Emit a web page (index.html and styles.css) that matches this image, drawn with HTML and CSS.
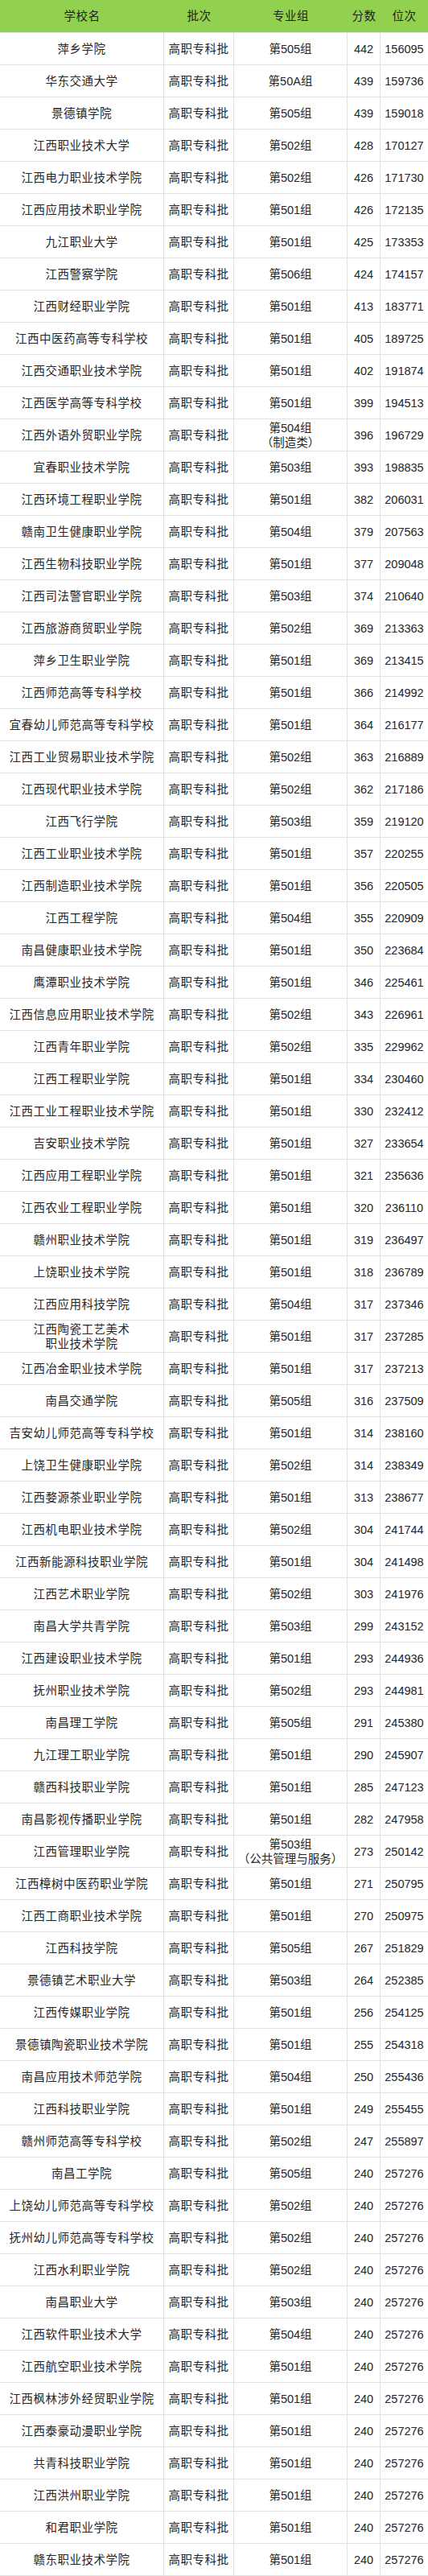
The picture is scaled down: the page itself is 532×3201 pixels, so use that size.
FILE: index.html
```html
<!DOCTYPE html>
<html lang="zh-CN">
<head>
<meta charset="utf-8">
<title>高职专科批投档线</title>
<link rel="stylesheet" href="styles.css">
</head>
<body>
<div class="sheet">
  <div class="row head"><div class="c t">学校名</div><div class="c t">批次</div><div class="c t">专业组</div><div class="c t">分数</div><div class="c t">位次</div></div>
  <div class="row"><div class="c t">萍乡学院</div><div class="c t">高职专科批</div><div class="c">第505组</div><div class="c">442</div><div class="c">156095</div></div>
  <div class="row"><div class="c t">华东交通大学</div><div class="c t">高职专科批</div><div class="c">第50A组</div><div class="c">439</div><div class="c">159736</div></div>
  <div class="row"><div class="c t">景德镇学院</div><div class="c t">高职专科批</div><div class="c">第505组</div><div class="c">439</div><div class="c">159018</div></div>
  <div class="row"><div class="c t">江西职业技术大学</div><div class="c t">高职专科批</div><div class="c">第502组</div><div class="c">428</div><div class="c">170127</div></div>
  <div class="row"><div class="c t">江西电力职业技术学院</div><div class="c t">高职专科批</div><div class="c">第502组</div><div class="c">426</div><div class="c">171730</div></div>
  <div class="row"><div class="c t">江西应用技术职业学院</div><div class="c t">高职专科批</div><div class="c">第501组</div><div class="c">426</div><div class="c">172135</div></div>
  <div class="row"><div class="c t">九江职业大学</div><div class="c t">高职专科批</div><div class="c">第501组</div><div class="c">425</div><div class="c">173353</div></div>
  <div class="row"><div class="c t">江西警察学院</div><div class="c t">高职专科批</div><div class="c">第506组</div><div class="c">424</div><div class="c">174157</div></div>
  <div class="row"><div class="c t">江西财经职业学院</div><div class="c t">高职专科批</div><div class="c">第501组</div><div class="c">413</div><div class="c">183771</div></div>
  <div class="row"><div class="c t">江西中医药高等专科学校</div><div class="c t">高职专科批</div><div class="c">第501组</div><div class="c">405</div><div class="c">189725</div></div>
  <div class="row"><div class="c t">江西交通职业技术学院</div><div class="c t">高职专科批</div><div class="c">第501组</div><div class="c">402</div><div class="c">191874</div></div>
  <div class="row"><div class="c t">江西医学高等专科学校</div><div class="c t">高职专科批</div><div class="c">第501组</div><div class="c">399</div><div class="c">194513</div></div>
  <div class="row"><div class="c t">江西外语外贸职业学院</div><div class="c t">高职专科批</div><div class="c">第504组<br>（制造类）</div><div class="c">396</div><div class="c">196729</div></div>
  <div class="row"><div class="c t">宜春职业技术学院</div><div class="c t">高职专科批</div><div class="c">第503组</div><div class="c">393</div><div class="c">198835</div></div>
  <div class="row"><div class="c t">江西环境工程职业学院</div><div class="c t">高职专科批</div><div class="c">第501组</div><div class="c">382</div><div class="c">206031</div></div>
  <div class="row"><div class="c t">赣南卫生健康职业学院</div><div class="c t">高职专科批</div><div class="c">第504组</div><div class="c">379</div><div class="c">207563</div></div>
  <div class="row"><div class="c t">江西生物科技职业学院</div><div class="c t">高职专科批</div><div class="c">第501组</div><div class="c">377</div><div class="c">209048</div></div>
  <div class="row"><div class="c t">江西司法警官职业学院</div><div class="c t">高职专科批</div><div class="c">第503组</div><div class="c">374</div><div class="c">210640</div></div>
  <div class="row"><div class="c t">江西旅游商贸职业学院</div><div class="c t">高职专科批</div><div class="c">第502组</div><div class="c">369</div><div class="c">213363</div></div>
  <div class="row"><div class="c t">萍乡卫生职业学院</div><div class="c t">高职专科批</div><div class="c">第501组</div><div class="c">369</div><div class="c">213415</div></div>
  <div class="row"><div class="c t">江西师范高等专科学校</div><div class="c t">高职专科批</div><div class="c">第501组</div><div class="c">366</div><div class="c">214992</div></div>
  <div class="row"><div class="c t">宜春幼儿师范高等专科学校</div><div class="c t">高职专科批</div><div class="c">第501组</div><div class="c">364</div><div class="c">216177</div></div>
  <div class="row"><div class="c t">江西工业贸易职业技术学院</div><div class="c t">高职专科批</div><div class="c">第502组</div><div class="c">363</div><div class="c">216889</div></div>
  <div class="row"><div class="c t">江西现代职业技术学院</div><div class="c t">高职专科批</div><div class="c">第502组</div><div class="c">362</div><div class="c">217186</div></div>
  <div class="row"><div class="c t">江西飞行学院</div><div class="c t">高职专科批</div><div class="c">第503组</div><div class="c">359</div><div class="c">219120</div></div>
  <div class="row"><div class="c t">江西工业职业技术学院</div><div class="c t">高职专科批</div><div class="c">第501组</div><div class="c">357</div><div class="c">220255</div></div>
  <div class="row"><div class="c t">江西制造职业技术学院</div><div class="c t">高职专科批</div><div class="c">第501组</div><div class="c">356</div><div class="c">220505</div></div>
  <div class="row"><div class="c t">江西工程学院</div><div class="c t">高职专科批</div><div class="c">第504组</div><div class="c">355</div><div class="c">220909</div></div>
  <div class="row"><div class="c t">南昌健康职业技术学院</div><div class="c t">高职专科批</div><div class="c">第501组</div><div class="c">350</div><div class="c">223684</div></div>
  <div class="row"><div class="c t">鹰潭职业技术学院</div><div class="c t">高职专科批</div><div class="c">第501组</div><div class="c">346</div><div class="c">225461</div></div>
  <div class="row"><div class="c t">江西信息应用职业技术学院</div><div class="c t">高职专科批</div><div class="c">第502组</div><div class="c">343</div><div class="c">226961</div></div>
  <div class="row"><div class="c t">江西青年职业学院</div><div class="c t">高职专科批</div><div class="c">第502组</div><div class="c">335</div><div class="c">229962</div></div>
  <div class="row"><div class="c t">江西工程职业学院</div><div class="c t">高职专科批</div><div class="c">第501组</div><div class="c">334</div><div class="c">230460</div></div>
  <div class="row"><div class="c t">江西工业工程职业技术学院</div><div class="c t">高职专科批</div><div class="c">第501组</div><div class="c">330</div><div class="c">232412</div></div>
  <div class="row"><div class="c t">吉安职业技术学院</div><div class="c t">高职专科批</div><div class="c">第501组</div><div class="c">327</div><div class="c">233654</div></div>
  <div class="row"><div class="c t">江西应用工程职业学院</div><div class="c t">高职专科批</div><div class="c">第501组</div><div class="c">321</div><div class="c">235636</div></div>
  <div class="row"><div class="c t">江西农业工程职业学院</div><div class="c t">高职专科批</div><div class="c">第501组</div><div class="c">320</div><div class="c">236110</div></div>
  <div class="row"><div class="c t">赣州职业技术学院</div><div class="c t">高职专科批</div><div class="c">第501组</div><div class="c">319</div><div class="c">236497</div></div>
  <div class="row"><div class="c t">上饶职业技术学院</div><div class="c t">高职专科批</div><div class="c">第501组</div><div class="c">318</div><div class="c">236789</div></div>
  <div class="row"><div class="c t">江西应用科技学院</div><div class="c t">高职专科批</div><div class="c">第504组</div><div class="c">317</div><div class="c">237346</div></div>
  <div class="row"><div class="c t">江西陶瓷工艺美术<br>职业技术学院</div><div class="c t">高职专科批</div><div class="c">第501组</div><div class="c">317</div><div class="c">237285</div></div>
  <div class="row"><div class="c t">江西冶金职业技术学院</div><div class="c t">高职专科批</div><div class="c">第501组</div><div class="c">317</div><div class="c">237213</div></div>
  <div class="row"><div class="c t">南昌交通学院</div><div class="c t">高职专科批</div><div class="c">第505组</div><div class="c">316</div><div class="c">237509</div></div>
  <div class="row"><div class="c t">吉安幼儿师范高等专科学校</div><div class="c t">高职专科批</div><div class="c">第501组</div><div class="c">314</div><div class="c">238160</div></div>
  <div class="row"><div class="c t">上饶卫生健康职业学院</div><div class="c t">高职专科批</div><div class="c">第502组</div><div class="c">314</div><div class="c">238349</div></div>
  <div class="row"><div class="c t">江西婺源茶业职业学院</div><div class="c t">高职专科批</div><div class="c">第501组</div><div class="c">313</div><div class="c">238677</div></div>
  <div class="row"><div class="c t">江西机电职业技术学院</div><div class="c t">高职专科批</div><div class="c">第502组</div><div class="c">304</div><div class="c">241744</div></div>
  <div class="row"><div class="c t">江西新能源科技职业学院</div><div class="c t">高职专科批</div><div class="c">第501组</div><div class="c">304</div><div class="c">241498</div></div>
  <div class="row"><div class="c t">江西艺术职业学院</div><div class="c t">高职专科批</div><div class="c">第502组</div><div class="c">303</div><div class="c">241976</div></div>
  <div class="row"><div class="c t">南昌大学共青学院</div><div class="c t">高职专科批</div><div class="c">第503组</div><div class="c">299</div><div class="c">243152</div></div>
  <div class="row"><div class="c t">江西建设职业技术学院</div><div class="c t">高职专科批</div><div class="c">第501组</div><div class="c">293</div><div class="c">244936</div></div>
  <div class="row"><div class="c t">抚州职业技术学院</div><div class="c t">高职专科批</div><div class="c">第502组</div><div class="c">293</div><div class="c">244981</div></div>
  <div class="row"><div class="c t">南昌理工学院</div><div class="c t">高职专科批</div><div class="c">第505组</div><div class="c">291</div><div class="c">245380</div></div>
  <div class="row"><div class="c t">九江理工职业学院</div><div class="c t">高职专科批</div><div class="c">第501组</div><div class="c">290</div><div class="c">245907</div></div>
  <div class="row"><div class="c t">赣西科技职业学院</div><div class="c t">高职专科批</div><div class="c">第501组</div><div class="c">285</div><div class="c">247123</div></div>
  <div class="row"><div class="c t">南昌影视传播职业学院</div><div class="c t">高职专科批</div><div class="c">第501组</div><div class="c">282</div><div class="c">247958</div></div>
  <div class="row"><div class="c t">江西管理职业学院</div><div class="c t">高职专科批</div><div class="c">第503组<br>（公共管理与服务）</div><div class="c">273</div><div class="c">250142</div></div>
  <div class="row"><div class="c t">江西樟树中医药职业学院</div><div class="c t">高职专科批</div><div class="c">第501组</div><div class="c">271</div><div class="c">250795</div></div>
  <div class="row"><div class="c t">江西工商职业技术学院</div><div class="c t">高职专科批</div><div class="c">第501组</div><div class="c">270</div><div class="c">250975</div></div>
  <div class="row"><div class="c t">江西科技学院</div><div class="c t">高职专科批</div><div class="c">第505组</div><div class="c">267</div><div class="c">251829</div></div>
  <div class="row"><div class="c t">景德镇艺术职业大学</div><div class="c t">高职专科批</div><div class="c">第503组</div><div class="c">264</div><div class="c">252385</div></div>
  <div class="row"><div class="c t">江西传媒职业学院</div><div class="c t">高职专科批</div><div class="c">第501组</div><div class="c">256</div><div class="c">254125</div></div>
  <div class="row"><div class="c t">景德镇陶瓷职业技术学院</div><div class="c t">高职专科批</div><div class="c">第501组</div><div class="c">255</div><div class="c">254318</div></div>
  <div class="row"><div class="c t">南昌应用技术师范学院</div><div class="c t">高职专科批</div><div class="c">第504组</div><div class="c">250</div><div class="c">255436</div></div>
  <div class="row"><div class="c t">江西科技职业学院</div><div class="c t">高职专科批</div><div class="c">第501组</div><div class="c">249</div><div class="c">255455</div></div>
  <div class="row"><div class="c t">赣州师范高等专科学校</div><div class="c t">高职专科批</div><div class="c">第502组</div><div class="c">247</div><div class="c">255897</div></div>
  <div class="row"><div class="c t">南昌工学院</div><div class="c t">高职专科批</div><div class="c">第505组</div><div class="c">240</div><div class="c">257276</div></div>
  <div class="row"><div class="c t">上饶幼儿师范高等专科学校</div><div class="c t">高职专科批</div><div class="c">第502组</div><div class="c">240</div><div class="c">257276</div></div>
  <div class="row"><div class="c t">抚州幼儿师范高等专科学校</div><div class="c t">高职专科批</div><div class="c">第502组</div><div class="c">240</div><div class="c">257276</div></div>
  <div class="row"><div class="c t">江西水利职业学院</div><div class="c t">高职专科批</div><div class="c">第502组</div><div class="c">240</div><div class="c">257276</div></div>
  <div class="row"><div class="c t">南昌职业大学</div><div class="c t">高职专科批</div><div class="c">第503组</div><div class="c">240</div><div class="c">257276</div></div>
  <div class="row"><div class="c t">江西软件职业技术大学</div><div class="c t">高职专科批</div><div class="c">第504组</div><div class="c">240</div><div class="c">257276</div></div>
  <div class="row"><div class="c t">江西航空职业技术学院</div><div class="c t">高职专科批</div><div class="c">第501组</div><div class="c">240</div><div class="c">257276</div></div>
  <div class="row"><div class="c t">江西枫林涉外经贸职业学院</div><div class="c t">高职专科批</div><div class="c">第501组</div><div class="c">240</div><div class="c">257276</div></div>
  <div class="row"><div class="c t">江西泰豪动漫职业学院</div><div class="c t">高职专科批</div><div class="c">第501组</div><div class="c">240</div><div class="c">257276</div></div>
  <div class="row"><div class="c t">共青科技职业学院</div><div class="c t">高职专科批</div><div class="c">第501组</div><div class="c">240</div><div class="c">257276</div></div>
  <div class="row"><div class="c t">江西洪州职业学院</div><div class="c t">高职专科批</div><div class="c">第501组</div><div class="c">240</div><div class="c">257276</div></div>
  <div class="row"><div class="c t">和君职业学院</div><div class="c t">高职专科批</div><div class="c">第501组</div><div class="c">240</div><div class="c">257276</div></div>
  <div class="row"><div class="c t">赣东职业技术学院</div><div class="c t">高职专科批</div><div class="c">第501组</div><div class="c">240</div><div class="c">257276</div></div>
</div>
</body>
</html>
```

FILE: styles.css
```css
html, body {
  margin: 0;
  padding: 0;
  background: #ffffff;
}

body {
  font-family: "Liberation Sans", "Noto Sans CJK SC", sans-serif;
  font-size: 14.5px;
  color: #262626;
}

.sheet {
  width: 532px;
  border-bottom: 1px solid #e1e1e1;
}

.row {
  display: grid;
  grid-template-columns: 204px 87px 141px 41px 59px;
  height: 40px;
  box-sizing: border-box;
  border-top: 1px solid #e1e1e1;
}

.row.head {
  border-top: none;
  background: #92d050;
  color: #1f1f1f;
}

.c {
  display: flex;
  align-items: center;
  justify-content: center;
  text-align: center;
  white-space: nowrap;
  line-height: 18px;
  box-sizing: border-box;
  border-right: 1px solid #e1e1e1;
  overflow: hidden;
}

.c:last-child {
  border-right: none;
}

.row.head .c {
  border-right: none;
}

.t {
  letter-spacing: 0.5px;
}
```
